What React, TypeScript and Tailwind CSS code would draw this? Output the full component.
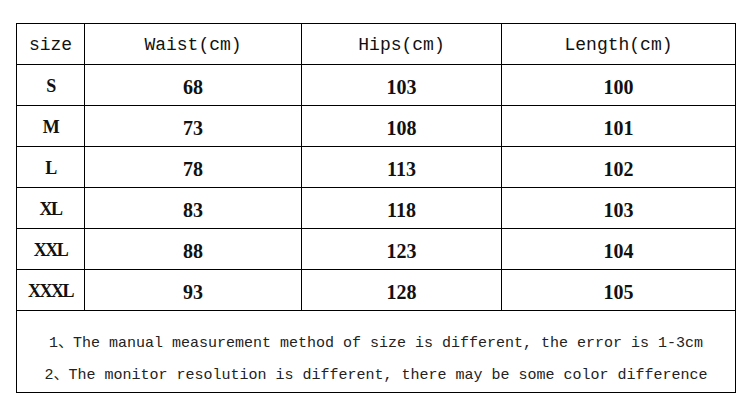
import React from "react";

const rows = [
  { size: "S", waist: "68", hips: "103", length: "100" },
  { size: "M", waist: "73", hips: "108", length: "101" },
  { size: "L", waist: "78", hips: "113", length: "102" },
  { size: "XL", waist: "83", hips: "118", length: "103" },
  { size: "XXL", waist: "88", hips: "123", length: "104" },
  { size: "XXXL", waist: "93", hips: "128", length: "105" },
];

const mono = "font-['Liberation_Mono','Noto_Sans_CJK_SC',monospace]";
const serif = "font-['Liberation_Serif','Noto_Sans_CJK_SC',serif]";

const App = () => {
  return (
    <div className="w-[750px] h-[415px] bg-white pt-[23px] pl-[16px]">
      <table className="table-fixed border-collapse w-[719px] text-[#111]">
        <colgroup>
          <col className="w-[68px]" />
          <col className="w-[217px]" />
          <col className="w-[200px]" />
          <col className="w-[234px]" />
        </colgroup>
        <thead>
          {/* Header */}
          <tr className="h-[41px]">
            <th className={`border border-black text-center font-normal text-[18px] pt-[3px] ${mono}`}>size</th>
            <th className={`border border-black text-center font-normal text-[18px] pt-[3px] ${mono}`}>Waist(cm)</th>
            <th className={`border border-black text-center font-normal text-[18px] pt-[3px] ${mono}`}>Hips(cm)</th>
            <th className={`border border-black text-center font-normal text-[18px] pt-[3px] ${mono}`}>Length(cm)</th>
          </tr>
        </thead>
        <tbody>
          {rows.map((r) => (
            <tr key={r.size} className="h-[41px]">
              <td className={`border border-black text-center font-bold text-[18px] tracking-[-1.5px] pt-[3px] ${serif}`}>{r.size}</td>
              <td className={`border border-black text-center font-bold text-[20px] pt-[4px] ${serif}`}>{r.waist}</td>
              <td className={`border border-black text-center font-bold text-[20px] pt-[4px] ${serif}`}>{r.hips}</td>
              <td className={`border border-black text-center font-bold text-[20px] pt-[4px] ${serif}`}>{r.length}</td>
            </tr>
          ))}
          {/* Notes */}
          <tr className="h-[82px]">
            <td colSpan={4} className={`border border-black text-center align-top pt-[17px] text-[15px] leading-[32px] text-[#222] ${mono}`}>
              <div>1、The manual measurement method of size is different, the error is 1-3cm</div>
              <div>2、The monitor resolution is different, there may be some color difference</div>
            </td>
          </tr>
        </tbody>
      </table>
    </div>
  );
};

export default App;
